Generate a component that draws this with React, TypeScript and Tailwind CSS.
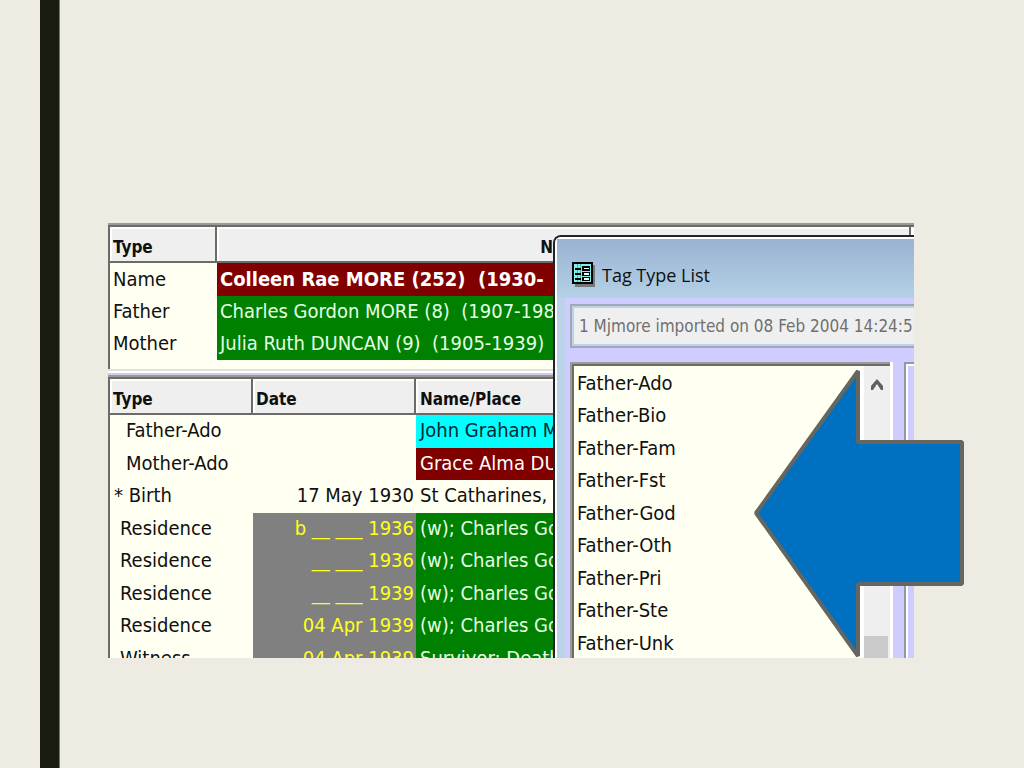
import React from 'react';

interface Person {
  label: string;
  value: string;
  className: string;
}

interface EventRow {
  type: string;
  indent: string;
  date: string;
  place: string;
  dateClass: string;
  placeClass: string;
}

const people: Person[] = [
  { label: 'Name', value: 'Colleen Rae MORE (252)  (1930-', className: 'bg-[#800000] text-white font-bold' },
  { label: 'Father', value: 'Charles Gordon MORE (8)  (1907-198', className: 'bg-[#008000] text-[#e4ffe4]' },
  { label: 'Mother', value: 'Julia Ruth DUNCAN (9)  (1905-1939)', className: 'bg-[#008000] text-[#e4ffe4]' },
];

const grey = 'bg-[#808080] text-[#ffff20]';
const green = 'bg-[#008000] text-[#e4ffe4]';

const events: EventRow[] = [
  { type: 'Father-Ado', indent: 'pl-4', date: '', place: 'John Graham M', dateClass: '', placeClass: 'bg-[#00ffff] text-[#002830]' },
  { type: 'Mother-Ado', indent: 'pl-4', date: '', place: 'Grace Alma DUN', dateClass: '', placeClass: 'bg-[#800000] text-white' },
  { type: '* Birth', indent: 'pl-1', date: '17 May 1930', place: 'St Catharines, O', dateClass: '', placeClass: '' },
  { type: 'Residence', indent: 'pl-[10px]', date: 'b __ ___ 1936', place: '(w); Charles Go', dateClass: grey, placeClass: green },
  { type: 'Residence', indent: 'pl-[10px]', date: '__ ___ 1936', place: '(w); Charles Go', dateClass: grey, placeClass: green },
  { type: 'Residence', indent: 'pl-[10px]', date: '__ ___ 1939', place: '(w); Charles Go', dateClass: grey, placeClass: green },
  { type: 'Residence', indent: 'pl-[10px]', date: '04 Apr 1939', place: '(w); Charles Go', dateClass: grey, placeClass: green },
  { type: 'Witness', indent: 'pl-[10px]', date: '04 Apr 1939', place: 'Survivor: Death', dateClass: grey, placeClass: green },
];

const tagTypes = [
  'Father-Ado',
  'Father-Bio',
  'Father-Fam',
  'Father-Fst',
  'Father-God',
  'Father-Oth',
  'Father-Pri',
  'Father-Ste',
  'Father-Unk',
];

const headCell = 'h-9 border-b-2 border-r-2 border-[#6b6b68] bg-[#efefef] pr-0 pt-[6px] text-[17px] font-bold shadow-[inset_2px_2px_0_#ffffff]';

function PersonTable() {
  return (
    <div className="h-[146px] border-t-2 border-[#9a9a96] bg-[#fffff2]">
      <div className="h-full border-l-2 border-t-2 border-[#6b6b68]">
        <table className="w-full table-fixed border-separate border-spacing-0 whitespace-pre text-left">
          <thead>
            <tr>
              <th className={`w-[107px] pl-[3px] ${headCell}`}>Type</th>
              <th className={`pl-1 text-center ${headCell}`}>Name</th>
              <th className="w-[3px] border-b-2 border-[#6b6b68] bg-white p-0" />
            </tr>
          </thead>
          <tbody>
            {people.map((person) => (
              <tr key={person.label} className="h-8 first:h-[33px]">
                <td className="p-0 pb-[2px] pl-[3px]">{person.label}</td>
                <td colSpan={2} className={`p-0 pb-[2px] pl-[3px] ${person.className}`}>{person.value}</td>
              </tr>
            ))}
          </tbody>
        </table>
      </div>
    </div>
  );
}

function EventTable() {
  return (
    <div className="border-t-2 border-[#9a9a96] bg-[#fffff2]">
      <div className="border-l-2 border-t-2 border-[#6b6b68]">
        <table className="w-full table-fixed border-separate border-spacing-0 whitespace-pre text-left">
          <thead>
            <tr>
              <th className={`w-[143px] pl-[3px] ${headCell}`}>Type</th>
              <th className={`w-[163px] pl-[3px] ${headCell}`}>Date</th>
              <th className={`pl-1 ${headCell}`}>Name/Place</th>
            </tr>
          </thead>
          <tbody>
            {events.map((row, index) => (
              <tr key={index} className="h-8 odd:h-[33px]">
                <td className={`p-0 pb-[3px] ${row.indent}`}>{row.type}</td>
                <td className={`p-0 pb-[3px] pr-[2px] text-right ${row.dateClass}`}>{row.date}</td>
                <td className={`p-0 pb-[3px] pl-1 ${row.placeClass}`}>{row.place}</td>
              </tr>
            ))}
          </tbody>
        </table>
      </div>
    </div>
  );
}

function ListIcon() {
  return (
    <svg width="24" height="26" viewBox="0 0 24 26" shapeRendering="crispEdges" aria-hidden="true">
      <path d="M3 3h20v22H3z" fill="#75797d" />
      <path d="M0 0h21v22H0z" fill="#000000" />
      <path d="M2 2h17v18H2z" fill="#7df0ee" />
      <path d="M5 2h1v18H5zM8 2h1v18H8z" fill="#4fb5b4" />
      <path d="M3 6h6v2H3zM3 11h6v2H3zM3 16h6v2H3z" fill="#000000" />
      <path d="M10 4h8v5h-8zM10 10h8v4h-8zM10 15h8v4h-8z" fill="#000000" />
      <path d="M12 6h5v1h-5zM12 11h5v2h-5zM12 16h5v2h-5z" fill="#e4fffe" />
    </svg>
  );
}

function TagTypeDialog() {
  return (
    <section
      aria-label="Tag Type List"
      className="absolute bottom-0 left-[445px] right-0 top-3 flex flex-col overflow-hidden rounded-tl-lg border-l-2 border-t-2 border-[#20242a] bg-[#bad3e9]"
    >
      <header className="flex h-[61px] shrink-0 items-center gap-[6px] border-l-2 border-t-2 border-white bg-linear-to-b from-[#9ab3d1] to-[#b4d1e7] pl-[15px] pt-3 font-['Open_Sans','Noto_Sans',sans-serif] text-[18px]">
        <ListIcon />
        <h2>Tag Type List</h2>
      </header>
      <div className="flex min-h-0 flex-1 border-l-2 border-white pl-2">
        <div className="flex min-w-0 flex-1 flex-col bg-[#cfccff] pl-[5px] pt-[6px]">
          <input
            type="text"
            readOnly
            aria-label="Data set"
            value="1 Mjmore imported on 08 Feb 2004 14:24:5"
            className="h-11 w-full shrink-0 border-y-2 border-l-2 border-[#a3a8b3] bg-[#efefef] pl-[7px] text-[17px] text-[#707070] shadow-[inset_2px_2px_0_#b9d3ea,inset_0_-2px_0_#b9d3ea] outline-none"
          />
          <div className="mt-[14px] flex min-h-0 flex-1">
            <div className="flex min-w-0 flex-1 border-l-2 border-t-2 border-[#9a9a96]">
              <div className="flex min-w-0 flex-1 border-l-2 border-t-2 border-[#6b6b68] bg-[#fffff2]">
                <ul className="flex-1 pl-[3px]">
                  {tagTypes.map((tag) => (
                    <li key={tag} className="flex h-8 items-center odd:h-[33px]">{tag}</li>
                  ))}
                </ul>
                <div className="flex w-[31px] flex-col justify-between border-l-[5px] border-white bg-[#efefef]">
                  <button type="button" aria-label="Scroll up" className="flex h-9 items-center justify-center">
                    <svg width="14" height="13" viewBox="0 0 14 13" aria-hidden="true">
                      <path d="M1 12V8L7 1L13 8V12H11L7 6L3 12Z" fill="#606060" />
                    </svg>
                  </button>
                  <div className="h-[22px] w-6 bg-[#cbcbcb]" />
                </div>
              </div>
            </div>
            <div className="w-[3px] bg-white" />
            <div className="ml-[11px] w-[10px] border-l-2 border-t-2 border-[#97979f] shadow-[inset_2px_2px_0_#ffffff]" />
          </div>
        </div>
      </div>
    </section>
  );
}

export default function App() {
  return (
    <main className="flex min-h-screen bg-[#eeebe2] pl-10 font-['DejaVu_Sans_Condensed','DejaVu_Sans',sans-serif] text-[20px] leading-6 text-[#101010]">
      <div className="w-5 shrink-0 border-r border-[#77776a] bg-[#191b0e]" />
      <div className="min-w-0 flex-1 pb-[110px] pl-12 pr-[110px] pt-[223px]">
        <div className="relative">
          <div className="h-[435px] overflow-hidden bg-[#cfccf0]">
            <PersonTable />
            <div className="mb-[2px] h-1 border-t-2 border-[#dfdfdc] bg-white" />
            <EventTable />
          </div>
          <TagTypeDialog />
          <svg
            className="absolute -right-[50px] top-[144px]"
            width="212"
            height="292"
            viewBox="0 0 212 292"
            aria-hidden="true"
          >
            <path
              d="M4 146L106 4V75H210V217H106V289Z"
              fill="#0070c0"
              stroke="#646661"
              strokeWidth="4"
              strokeLinejoin="bevel"
            />
          </svg>
        </div>
      </div>
    </main>
  );
}
